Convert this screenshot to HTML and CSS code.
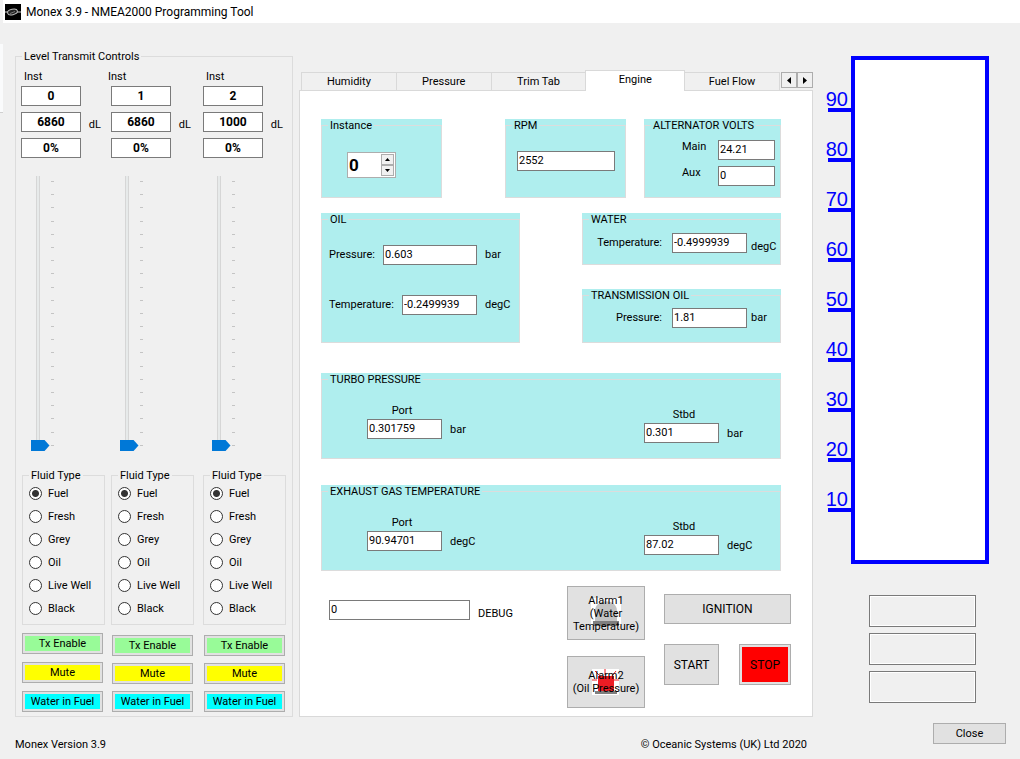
FILE: index.html
```html
<!DOCTYPE html>
<html lang="en">
<head>
<meta charset="utf-8">
<title>Monex 3.9 - NMEA2000 Programming Tool</title>
<link rel="stylesheet" href="styles.css">
</head>
<body>
<header class="titlebar">
  <svg class="logo" viewBox="0 0 16 16" aria-hidden="true"><rect width="16" height="16" fill="#000"/><path d="M0 8h3M12 8h4" stroke="#ccc"/><ellipse cx="7.5" cy="8" rx="5" ry="2.7" fill="#222" stroke="#bbb" transform="rotate(-12 7.5 8)"/><path d="M5 9.5l5-2" stroke="#777"/></svg>
  <h1 class="title">Monex 3.9 - NMEA2000 Programming Tool</h1>
</header>
<div class="edge"></div>
<main class="window">
  <fieldset class="box levels">
    <legend>Level Transmit Controls</legend>
    <div class="channels" id="channels"></div>
  </fieldset>

  <section class="tabs">
    <div class="tabbar">
      <button class="tab">Humidity</button>
      <button class="tab">Pressure</button>
      <button class="tab">Trim Tab</button>
      <button class="tab active">Engine</button>
      <button class="tab">Fuel Flow</button>
      <div class="scroll">
        <button aria-label="Previous tabs"><svg viewBox="0 0 4 7"><path d="M4 0v7L0 3.5z"/></svg></button>
        <button aria-label="Next tabs"><svg viewBox="0 0 4 7"><path d="M0 0v7l4-3.5z"/></svg></button>
      </div>
    </div>
    <div class="panel">
      <div class="row top">
        <div class="group narrow"><fieldset class="box instance"><legend>Instance</legend>
          <div class="spinner">
            <input type="text" value="0" aria-label="Instance">
            <div class="arrows">
              <button aria-label="Increase"><svg viewBox="0 0 5 3"><path d="M0 3h5L2.5 0z"/></svg></button>
              <button aria-label="Decrease"><svg viewBox="0 0 5 3"><path d="M0 0h5L2.5 3z"/></svg></button>
            </div>
          </div>
        </fieldset></div>
        <div class="group narrow rpm-group"><fieldset class="box rpm"><legend>RPM</legend>
          <input class="text" type="text" value="2552" aria-label="RPM">
        </fieldset></div>
        <div class="group volts-group"><fieldset class="box volts"><legend>ALTERNATOR VOLTS</legend>
          <div class="volt"><label for="main">Main</label><input class="text" id="main" type="text" value="24.21"></div>
          <div class="volt"><label for="aux">Aux</label><input class="text" id="aux" type="text" value="0"></div>
        </fieldset></div>
      </div>

      <div class="row middle">
        <div class="group half"><fieldset class="box oil"><legend>OIL</legend>
          <div class="field"><label for="oilp">Pressure:</label><input class="text wide" id="oilp" type="text" value="0.603"><span class="unit">bar</span></div>
          <div class="field"><label for="oilt">Temperature:</label><input class="text" id="oilt" type="text" value="-0.2499939"><span class="unit">degC</span></div>
        </fieldset></div>
        <div class="stack half">
          <div class="group"><fieldset class="box fluid"><legend>WATER</legend>
            <div class="field"><label for="wt">Temperature:</label><input class="text" id="wt" type="text" value="-0.4999939"><span class="unit low">degC</span></div>
          </fieldset></div>
          <div class="group"><fieldset class="box fluid"><legend>TRANSMISSION OIL</legend>
            <div class="field"><label for="tp">Pressure:</label><input class="text" id="tp" type="text" value="1.81"><span class="unit">bar</span></div>
          </fieldset></div>
        </div>
      </div>

      <div class="group engine-pair turbo"><fieldset class="box pair"><legend>TURBO PRESSURE</legend>
        <div class="sides">
          <div class="side"><label for="t1">Port</label><input class="text" id="t1" type="text" value="0.301759"><span>bar</span></div>
          <div class="side stbd"><label for="t2">Stbd</label><input class="text" id="t2" type="text" value="0.301"><span>bar</span></div>
        </div>
      </fieldset></div>

      <div class="group engine-pair exhaust"><fieldset class="box pair"><legend>EXHAUST GAS TEMPERATURE</legend>
        <div class="sides">
          <div class="side"><label for="e1">Port</label><input class="text" id="e1" type="text" value="90.94701"><span>degC</span></div>
          <div class="side stbd"><label for="e2">Stbd</label><input class="text" id="e2" type="text" value="87.02"><span>degC</span></div>
        </div>
      </fieldset></div>

      <div class="bottom">
        <div class="debug"><input class="text" id="debug" type="text" value="0"><label for="debug">DEBUG</label></div>
        <div class="alarms">
          <button class="btn alarm">
            <svg viewBox="0 0 30 30" aria-hidden="true"><path fill="#fff" d="M0 0h30v28H0z"/><path d="M4 23V13C4 0 26 0 26 13v10z" fill="#c3c3c3"/><path d="M2 23h26v5H2z" fill="#7f7f7f"/></svg>
            <span>Alarm1<br>(Water<br>Temperature)</span>
          </button>
          <button class="btn alarm second">
            <svg viewBox="0 0 30 30" aria-hidden="true"><path fill="#fff" d="M1 2h27v26H1z"/><path d="M4 4l5 5M14 2v6M25 4l-4 5M1 13h5M23 13h5" stroke="#ed1c24"/><path d="M7 9h16v15H7z" fill="#ed1c24"/><path d="M4 24h22v3H4z" fill="#7f7f7f"/></svg>
            <span>Alarm2<br>(Oil Pressure)</span>
          </button>
        </div>
        <div class="engine-buttons">
          <button class="btn ignition">IGNITION</button>
          <div class="startstop">
            <button class="btn start">START</button>
            <button class="btn stop"><span>STOP</span></button>
          </div>
        </div>
      </div>
    </div>
  </section>

  <aside class="right">
    <div class="gauge">
      <div class="scale"><span>90</span><span>80</span><span>70</span><span>60</span><span>50</span><span>40</span><span>30</span><span>20</span><span>10</span></div>
      <div class="tank"></div>
    </div>
    <div class="readouts">
      <input class="readout" type="text" aria-label="Readout 1" readonly>
      <input class="readout" type="text" aria-label="Readout 2" readonly>
      <input class="readout" type="text" aria-label="Readout 3" readonly>
    </div>
    <button class="btn close">Close</button>
  </aside>

  <footer class="footer"><span>Monex Version 3.9</span><span>© Oceanic Systems (UK) Ltd 2020</span></footer>
</main>
<script src="app.js"></script>
</body>
</html>
```
FILE: styles.css
```css
* { box-sizing: border-box; }
body {
  margin: 0;
  min-height: 100vh;
  background: #f0f0f0;
  color: #000;
  font: 11px/14px Roboto, "Liberation Sans", sans-serif;
}
button, input { font: inherit; color: inherit; margin: 0; padding: 0; border-radius: 0; }
fieldset { min-width: 0; margin: 0; padding: 0; }
.titlebar {
  display: flex; align-items: center; gap: 5px;
  height: 23px; padding-left: 2px;
  background: #fff; border-left: 3px solid #f0f0f0;
}
.logo { width: 16px; height: 16px; }
.title { margin: 0; font: 12px/16px Roboto, sans-serif; }
.edge { position: absolute; left: 0; top: 44px; width: 3px; height: 69px; background: #fafbfc; border-bottom: 1px solid #d0d0d0; }

.window {
  display: grid;
  grid-template-columns: 278px minmax(514px, 1fr) 187px;
  column-gap: 6px;
  padding: 27px 14px 5px 15px;
}
.box { --inset: 0px; border: 1px solid #dcdcdc; }
.box > legend { margin-left: calc(6px - var(--inset)); padding: 0 2px; line-height: 13px; white-space: nowrap; }
.levels { --inset: 5px; padding: 7px 5px 4px; }
.channels { display: grid; grid-template-columns: 90fr 92fr 84fr; }
.inst { display: block; padding-left: 3px; }
.channel.mid .inst { padding-left: 0; margin-left: -3px; }
.channel { display: flex; flex-direction: column; width: 84px; }
.value {
  width: 60px; height: 20px; background: #fff; border: 1px solid #7a7a7a;
  text-align: center; font-size: 12px; font-weight: bold;
}
.values { display: flex; flex-direction: column; gap: 6px; padding-top: 2px; }
.litres { display: flex; justify-content: space-between; padding-right: 4px; }
.litres label { padding-top: 6px; }
.slider { display: flex; gap: 1px; height: 275px; margin: 18px 0 0 9px; }
.slider input {
  appearance: none; writing-mode: vertical-lr; direction: rtl;
  width: 20px; height: 275px;
  background: linear-gradient(90deg, #d6d6d6 1px, #e7eaea 1px 3px, #d6d6d6 3px) 6px 0 / 4px 100% no-repeat;
}
.slider input::-webkit-slider-thumb {
  appearance: none; width: 19px; height: 11px; background: #0078d7;
  clip-path: polygon(0 0, 74% 0, 100% 50%, 74% 100%, 0 100%);
}
.ticks { display: flex; flex-direction: column; justify-content: space-between; padding: 5px 0; }
.ticks i { width: 3px; height: 1px; background: #c4c4c4; }
.types { --inset: 6px; width: 83px; height: 156px; margin-top: 18px; margin-left: 1px; padding: 0 5px 0 6px; }
.channel + .channel .types { margin-left: 0; }
.channel + .channel .slider { margin-left: 8px; }
.types label { display: flex; align-items: center; gap: 6px; height: 23px; }
.types input {
  appearance: none; width: 13px; height: 13px; border: 1px solid #333; border-radius: 50%; background: #fff;
}
.types input:checked { background: radial-gradient(circle, #333 3px, #fff 4px); }
.actions { display: flex; flex-direction: column; gap: 8px; padding: 8px 0 0 1px; }
.channel + .channel .actions { gap: 7px; padding-top: 10px; }
.btn { border: 1px solid #adadad; background: #e1e1e1; }
.action { width: 81px; height: 21px; padding: 2px; }
.action span { display: block; height: 15px; line-height: 15px; }
.enable span { background: #98fb98; }
.mute span { background: #ff0; }
.water span { background: #0ff; }

.tabs { display: flex; flex-direction: column; padding-top: 20px; }
.tabbar { display: flex; align-items: flex-end; height: 20px; padding-left: 2px; }
.tab { flex: 96 1 0; height: 18px; margin-right: -1px; background: #f0f0f0; border: 1px solid #d9d9d9; border-bottom: 0; }
.tab.active { flex-grow: 100; height: 21px; margin-bottom: -1px; padding-bottom: 2px; background: #fff; position: relative; }
.scroll { display: flex; align-self: flex-start; margin-left: 2px; padding-top: 2px; }
.scroll button { display: grid; place-items: center; width: 16px; height: 16px; background: #f0f0f0; border: 1px solid #adadad; }
.scroll svg { width: 4px; height: 7px; }
.panel { flex: 1; padding: 28px 31px 8px 21px; background: #fff; border: 1px solid #d9d9d9; }
.group { background: #afeeee; }
.row { display: flex; justify-content: space-between; }
.text { width: 75px; height: 20px; padding: 0 1px 1px; background: #fff; border: 1px solid #7a7a7a; }
.top { gap: 18px; }
.top .box { height: 79px; }
.narrow { width: 121px; }
.rpm-group { margin-left: auto; }
.volts-group { width: 137px; }
.instance { --inset: 25px; padding: 20px 25px 0; }
.spinner { display: flex; width: 49px; height: 26px; padding: 1px; background: #fff; border: 1px solid #adadad; }
.spinner input { width: 32px; border: 0; background: transparent; font-size: 17px; font-weight: bold; }
.arrows { flex: 1; display: grid; grid-template-rows: 1fr 1fr; }
.arrows button { display: grid; place-items: center; background: #f0f0f0; border: 1px solid #adadad; }
.arrows svg { width: 5px; height: 3px; }
.rpm { --inset: 11px; padding: 19px 10px 0 11px; }
.rpm .text { width: 98px; }
.volts { --inset: 37px; padding: 8px 5px 0 37px; }
.volt { display: flex; justify-content: space-between; margin-bottom: 6px; }
.volt .text { width: 57px; }
.middle { margin-top: 15px; }
.half { width: 199px; }
.stack { display: flex; flex-direction: column; justify-content: space-between; }
.field { display: flex; align-items: center; }
.field label { flex: 1; }
.field .wide { width: 94px; }
.oil { --inset: 7px; height: 130px; padding: 19px 0 0 7px; }
.oil .field + .field { margin-top: 30px; }
.unit { width: 34px; margin-left: 8px; }
.fluid { height: 52px; padding-top: 6px; }
.group + .group .fluid { height: 54px; }
.fluid .field label { text-align: right; padding-right: 10px; }
.fluid .unit { width: 29px; margin-left: 4px; }
.low { padding-top: 8px; }
.engine-pair .box { height: 86px; }
.turbo { margin-top: 30px; }
.exhaust { margin-top: 26px; }
.sides { display: flex; justify-content: space-between; align-items: flex-start; padding: 18px 0 0 45px; }
.side { display: grid; grid-template-columns: 75px 53px; gap: 1px 8px; }
.side label { grid-column: 1 / -1; width: 70px; text-align: center; }
.side span { padding-top: 4px; }
.stbd { padding-top: 4px; }
.stbd label { width: 80px; }
.bottom { display: flex; justify-content: space-between; margin: 15px -10px 0 8px; }
.debug { display: flex; gap: 8px; padding-top: 14px; }
.debug .text { width: 141px; }
.debug label { padding-top: 7px; }
.alarms { display: flex; flex-direction: column; gap: 16px; margin-left: auto; margin-right: 19px; }
.alarm { display: grid; place-items: center; width: 78px; height: 54px; line-height: 13px; }
.alarm > * { grid-area: 1 / 1; }
.alarm.second { height: 52px; }
.alarm svg { width: 30px; height: 30px; }
.engine-buttons { display: flex; flex-direction: column; gap: 20px; padding-top: 8px; }
.ignition { width: 127px; height: 30px; }
.startstop { display: flex; justify-content: space-between; }
.start { width: 55px; height: 41px; }
.stop { width: 52px; height: 41px; padding: 2px; }
.stop span { display: grid; place-items: center; height: 35px; background: #f00; }
.ignition, .start, .stop { font-size: 12px; }

.right { grid-row: 1 / 3; grid-column: 3; display: flex; flex-direction: column; padding-top: 6px; }
.gauge { display: flex; height: 508px; padding-left: 9px; }
.scale { display: flex; flex-direction: column; padding-top: 6px; }
.scale span {
  display: flex; align-items: flex-end; justify-content: flex-end; width: 23px; height: 50px; padding-right: 3px;
  border-bottom: 4px solid #00f; color: #00f; font: 20px/17px "Liberation Sans", Arial, sans-serif;
}
.tank { width: 138px; border: 4px solid #00f; background: #fff; }
.readouts { display: flex; flex-direction: column; gap: 6px; padding: 31px 0 0 50px; }
.readout { width: 107px; height: 32px; background: #f0f0f0; border: 1px solid #7a7a7a; box-shadow: inset 0 0 0 1px #fff; }
.close { align-self: flex-end; width: 73px; height: 21px; margin-top: 20px; }
.footer { grid-column: 1 / 3; display: flex; justify-content: space-between; padding: 21px 6px 0 0; }
```
FILE: app.js
```js
const capacities = [6860, 6860, 1000];
const fluids = ["Fuel", "Fresh", "Grey", "Oil", "Live Well", "Black"];
document.getElementById("channels").innerHTML = capacities.map((capacity, n) => `
  <div class="channel ${n === 1 ? "mid" : ""}">
    <label class="inst" for="inst${n}">Inst</label>
    <div class="values">
      <input class="value" id="inst${n}" type="text" value="${n}">
      <div class="litres"><input class="value" id="cap${n}" type="text" value="${capacity}"><label for="cap${n}">dL</label></div>
      <input class="value" type="text" value="0%" aria-label="Level">
    </div>
    <div class="slider">
      <input type="range" min="0" max="100" value="0" aria-label="Tank level">
      <div class="ticks">${"<i></i>".repeat(21)}</div>
    </div>
    <fieldset class="box types"><legend>Fluid Type</legend>
      ${fluids.map((fluid, i) => `<label><input type="radio" name="fluid${n}" ${i ? "" : "checked"}>${fluid}</label>`).join("")}
    </fieldset>
    <div class="actions">
      <button class="btn action enable"><span>Tx Enable</span></button>
      <button class="btn action mute"><span>Mute</span></button>
      <button class="btn action water"><span>Water in Fuel</span></button>
    </div>
  </div>`).join("");
```
